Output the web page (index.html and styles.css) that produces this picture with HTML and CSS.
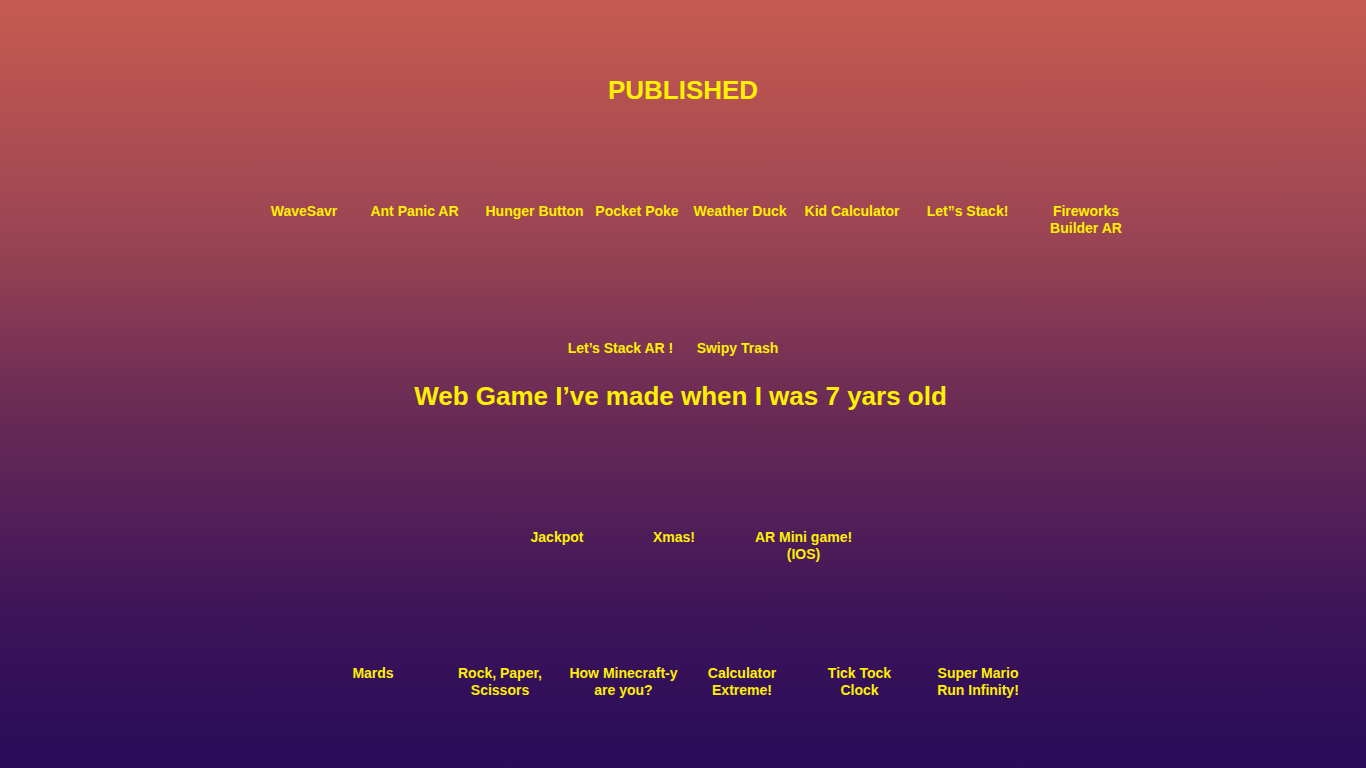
FILE: index.html
```html
<!DOCTYPE html>
<html lang="en">
<head>
<meta charset="utf-8">
<title>Published</title>
<link rel="stylesheet" href="styles.css">
</head>
<body>
<main class="page">
  <h2 class="title">PUBLISHED</h2>

  <div class="row row1">
    <a class="item w100">WaveSavr</a>
    <a class="item w121">Ant Panic AR</a>
    <a class="item w119">Hunger Button</a>
    <a class="item w86">Pocket Poke</a>
    <a class="item w120">Weather Duck</a>
    <a class="item w104">Kid Calculator</a>
    <a class="item w127">Let”s Stack!</a>
    <a class="item w110">Fireworks<br>Builder AR</a>
  </div>

  <div class="row row2">
    <a class="item w117">Let’s Stack AR !</a>
    <a class="item w117">Swipy Trash</a>
  </div>

  <h2 class="title sub">Web Game I’ve made when I was 7 yars old</h2>

  <div class="row row3">
    <a class="item w110">Jackpot</a>
    <a class="item w124">Xmas!</a>
    <a class="item w135">AR Mini game!<br>(IOS)</a>
  </div>

  <div class="row row4">
    <a class="item w120">Mards</a>
    <a class="item w134">Rock, Paper,<br>Scissors</a>
    <a class="item w113">How Minecraft-y<br>are you?</a>
    <a class="item w124">Calculator<br>Extreme!</a>
    <a class="item w111">Tick Tock<br>Clock</a>
    <a class="item w126">Super Mario<br>Run Infinity!</a>
  </div>
</main>
</body>
</html>
```

FILE: styles.css
```css
html, body {
  margin: 0;
  padding: 0;
}

body {
  min-height: 768px;
  background: linear-gradient(to bottom, #c65b50 0%, #9c4553 30%, #6c2c55 52%, #3d145a 80%, #290b58 100%);
  font-family: "Liberation Sans", Arial, sans-serif;
  font-weight: bold;
  color: #fff000;
}

.page {
  padding-top: 75px;
  display: flex;
  flex-direction: column;
}

.title {
  margin: 0;
  font-size: 26px;
  line-height: 30px;
  font-weight: bold;
  text-align: center;
}

.title.sub {
  margin-top: 24px;
  padding-right: 5px;
}

.row {
  display: flex;
  justify-content: center;
  align-items: flex-start;
  height: 34px;
}

.row1 { margin-top: 98px; padding-left: 29px; }
.row2 { margin-top: 103px; height: 17px; padding-right: 8px; }
.row3 { margin-top: 118px; padding-left: 7px; }
.row4 { margin-top: 102px; padding-right: 12px; }

.item {
  display: flex;
  flex-direction: column;
  align-items: center;
  flex: none;
  font-size: 14px;
  line-height: 17px;
  white-space: nowrap;
  text-align: center;
  color: #fff000;
  text-decoration: none;
}

.w86 { width: 86px; }
.w100 { width: 100px; }
.w104 { width: 104px; }
.w110 { width: 110px; }
.w111 { width: 111px; }
.w113 { width: 113px; }
.w117 { width: 117px; }
.w119 { width: 119px; }
.w120 { width: 120px; }
.w121 { width: 121px; }
.w124 { width: 124px; }
.w126 { width: 126px; }
.w127 { width: 127px; }
.w134 { width: 134px; }
.w135 { width: 135px; }
```
